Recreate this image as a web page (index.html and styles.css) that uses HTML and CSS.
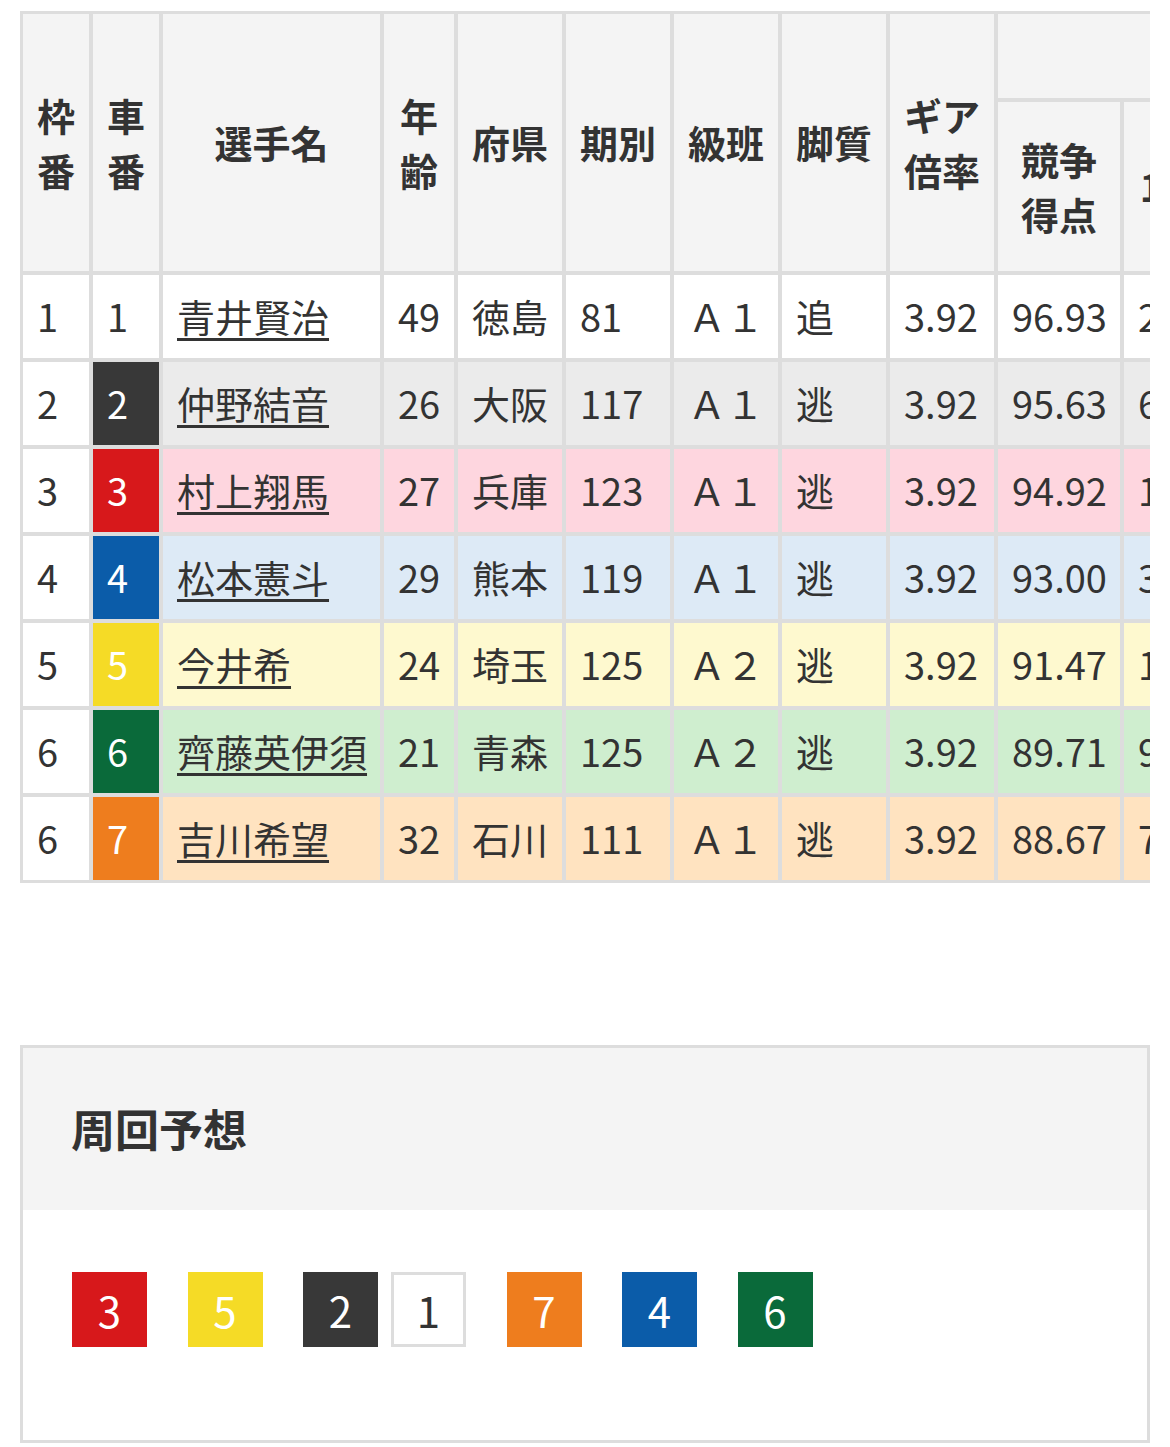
FILE: index.html
```html
<!DOCTYPE html>
<html lang="ja">
<head>
<meta charset="utf-8">
<title>出走表</title>
<link rel="stylesheet" href="styles.css">
</head>
<body>
<div class="table-wrap">
  <div class="entry-table">
    <div class="th th-span">枠番</div>
    <div class="th th-span">車番</div>
    <div class="th th-span">選手名</div>
    <div class="th th-span">年齢</div>
    <div class="th th-span">府県</div>
    <div class="th th-span">期別</div>
    <div class="th th-span">級班</div>
    <div class="th th-span">脚質</div>
    <div class="th th-span">ギア倍率</div>
    <div class="th th-group"></div>
    <div class="th">競争得点</div>
    <div class="th">1着</div>

    <div class="row r1">
      <div class="td">1</div><div class="td car car1">1</div><div class="td name"><a href="#">青井賢治</a></div><div class="td">49</div><div class="td">徳島</div><div class="td">81</div><div class="td">Ａ１</div><div class="td">追</div><div class="td">3.92</div><div class="td">96.93</div><div class="td">2</div>
    </div>
    <div class="row r2">
      <div class="td">2</div><div class="td car car2">2</div><div class="td name"><a href="#">仲野結音</a></div><div class="td">26</div><div class="td">大阪</div><div class="td">117</div><div class="td">Ａ１</div><div class="td">逃</div><div class="td">3.92</div><div class="td">95.63</div><div class="td">6</div>
    </div>
    <div class="row r3">
      <div class="td">3</div><div class="td car car3">3</div><div class="td name"><a href="#">村上翔馬</a></div><div class="td">27</div><div class="td">兵庫</div><div class="td">123</div><div class="td">Ａ１</div><div class="td">逃</div><div class="td">3.92</div><div class="td">94.92</div><div class="td">1</div>
    </div>
    <div class="row r4">
      <div class="td">4</div><div class="td car car4">4</div><div class="td name"><a href="#">松本憲斗</a></div><div class="td">29</div><div class="td">熊本</div><div class="td">119</div><div class="td">Ａ１</div><div class="td">逃</div><div class="td">3.92</div><div class="td">93.00</div><div class="td">3</div>
    </div>
    <div class="row r5">
      <div class="td">5</div><div class="td car car5">5</div><div class="td name"><a href="#">今井希</a></div><div class="td">24</div><div class="td">埼玉</div><div class="td">125</div><div class="td">Ａ２</div><div class="td">逃</div><div class="td">3.92</div><div class="td">91.47</div><div class="td">1</div>
    </div>
    <div class="row r6">
      <div class="td">6</div><div class="td car car6">6</div><div class="td name"><a href="#">齊藤英伊須</a></div><div class="td">21</div><div class="td">青森</div><div class="td">125</div><div class="td">Ａ２</div><div class="td">逃</div><div class="td">3.92</div><div class="td">89.71</div><div class="td">9</div>
    </div>
    <div class="row r7">
      <div class="td">6</div><div class="td car car7">7</div><div class="td name"><a href="#">吉川希望</a></div><div class="td">32</div><div class="td">石川</div><div class="td">111</div><div class="td">Ａ１</div><div class="td">逃</div><div class="td">3.92</div><div class="td">88.67</div><div class="td">7</div>
    </div>
  </div>
</div>

<section class="lap">
  <h2 class="lap-title">周回予想</h2>
  <div class="lap-body">
    <div class="lap-group"><span class="sq car3">3</span></div>
    <div class="lap-group"><span class="sq car5">5</span></div>
    <div class="lap-group"><span class="sq car2">2</span><span class="sq car1 sq-white">1</span></div>
    <div class="lap-group"><span class="sq car7">7</span></div>
    <div class="lap-group"><span class="sq car4">4</span></div>
    <div class="lap-group"><span class="sq car6">6</span></div>
  </div>
</section>
</body>
</html>
```

FILE: styles.css
```css
html, body {
  margin: 0;
  padding: 0;
  background: #ffffff;
}

body {
  font-family: "Noto Sans CJK JP", "Noto Sans", sans-serif;
  color: #333333;
  font-size: 38px;
  line-height: 1.44;
}

.table-wrap {
  margin: 11px 0 0 20px;
  width: 1130px;
  overflow: hidden;
}

.entry-table {
  display: grid;
  width: max-content;
  grid-template-columns: 66px 66px 217px 70px 104px 104px 104px 104px 104px 122px 92px;
  grid-template-rows: 84px 169px repeat(7, 83px);
  gap: 4px;
  background: #dddddd;
  border: 3px solid #dddddd;
}

.row {
  display: contents;
}

.th {
  background: #f4f4f4;
  font-weight: 700;
  text-align: center;
  display: flex;
  align-items: center;
  justify-content: center;
  padding: 0 12px;
}

.th-span {
  grid-row: span 2;
}

.th-group {
  grid-column: span 2;
}

.td {
  display: flex;
  align-items: center;
  padding: 0 14px;
  white-space: nowrap;
  background: #ffffff;
}

.name a {
  color: #333333;
  text-decoration: underline;
  text-decoration-thickness: 3px;
  text-underline-offset: 6px;
}

.r2 .td { background: #ebebeb; }
.r3 .td { background: #fed6df; }
.r4 .td { background: #ddeaf6; }
.r5 .td { background: #fef9cf; }
.r6 .td { background: #cfeecf; }
.r7 .td { background: #ffe3c0; }

.row .td:first-child { background: #ffffff; }

.car { color: #ffffff; }
.row .car1 { background: #ffffff; color: #333333; }
.row .car2, .sq.car2 { background: #383838; }
.row .car3, .sq.car3 { background: #d7181b; }
.row .car4, .sq.car4 { background: #0b5ca9; }
.row .car5, .sq.car5 { background: #f5db26; }
.row .car6, .sq.car6 { background: #0a6a3a; }
.row .car7, .sq.car7 { background: #ee7d1e; }

.lap {
  margin: 162px 0 0 20px;
  width: 1130px;
  box-sizing: border-box;
  border: 3px solid #dddddd;
}

.lap-title {
  margin: 0;
  height: 162px;
  box-sizing: border-box;
  background: #f4f4f4;
  display: flex;
  align-items: center;
  padding-left: 48px;
  font-size: 44px;
  font-weight: 700;
  color: #333333;
}

.lap-body {
  display: flex;
  gap: 40.5px;
  padding: 62px 0 93px 49px;
}

.lap-group {
  display: flex;
  gap: 13px;
}

.sq {
  width: 75px;
  height: 75px;
  box-sizing: border-box;
  display: flex;
  align-items: center;
  justify-content: center;
  font-size: 42px;
  line-height: 1;
  color: #ffffff;
}

.sq-white {
  background: #ffffff;
  border: 3px solid #dddddd;
  color: #333333;
}
```
